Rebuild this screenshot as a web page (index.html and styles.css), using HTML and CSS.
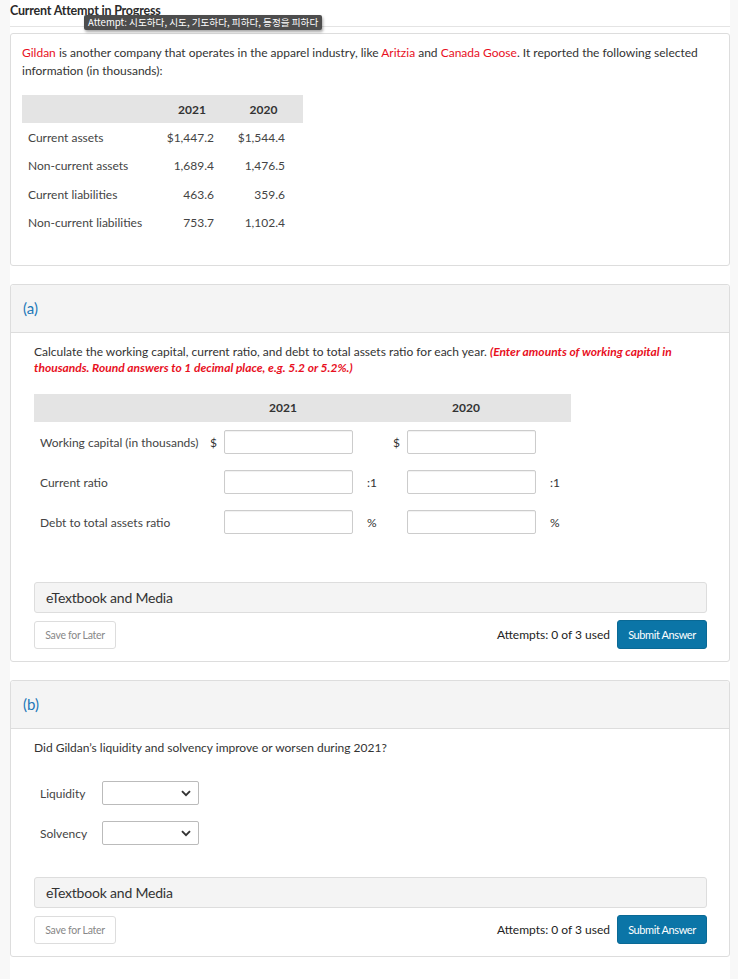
FILE: index.html
```html
<!DOCTYPE html>
<html lang="en">
<head>
<meta charset="utf-8">
<title>Current Attempt in Progress</title>
<link rel="stylesheet" href="styles.css">
</head>
<body>
<div class="page">
  <header class="top">
    <h1 class="title">Current Attempt in Progress</h1>
    <div class="tooltip">Attempt: 시도하다, 시도, 기도하다, 피하다, 등정을 피하다</div>
  </header>

  <section class="card intro">
    <p class="lead"><span class="red">Gildan</span> is another company that operates in the apparel industry, like <span class="red">Aritzia</span> and <span class="red">Canada Goose</span>. It reported the following selected information (in thousands):</p>
    <table class="data">
      <thead>
        <tr><th></th><th class="c2021">2021</th><th class="c2020">2020</th></tr>
      </thead>
      <tbody>
        <tr><td class="lbl">Current assets</td><td class="v1">$1,447.2</td><td class="v2">$1,544.4</td></tr>
        <tr><td class="lbl">Non-current assets</td><td class="v1">1,689.4</td><td class="v2">1,476.5</td></tr>
        <tr><td class="lbl">Current liabilities</td><td class="v1">463.6</td><td class="v2">359.6</td></tr>
        <tr><td class="lbl">Non-current liabilities</td><td class="v1">753.7</td><td class="v2">1,102.4</td></tr>
      </tbody>
    </table>
  </section>

  <section class="card part">
    <div class="part-head">(a)</div>
    <div class="part-body">
      <p class="q">Calculate the working capital, current ratio, and debt to total assets ratio for each year. <em class="hint">(Enter amounts of working capital in thousands. Round answers to 1 decimal place, e.g. 5.2 or 5.2%.)</em></p>
      <div class="grid">
        <div class="ghead">
          <span class="gh1">2021</span>
          <span class="gh2">2020</span>
        </div>
        <div class="grow">
          <span class="glabel">Working capital (in thousands)</span>
          <span class="pre">$</span><input class="inp" type="text"><span class="unit"></span>
          <span class="pre">$</span><input class="inp" type="text"><span class="unit"></span>
        </div>
        <div class="grow">
          <span class="glabel">Current ratio</span>
          <span class="pre"></span><input class="inp" type="text"><span class="unit">:1</span>
          <span class="pre"></span><input class="inp" type="text"><span class="unit">:1</span>
        </div>
        <div class="grow">
          <span class="glabel">Debt to total assets ratio</span>
          <span class="pre"></span><input class="inp" type="text"><span class="unit">%</span>
          <span class="pre"></span><input class="inp" type="text"><span class="unit">%</span>
        </div>
      </div>
      <div class="media media-a">eTextbook and Media</div>
      <div class="actions">
        <button class="save" type="button">Save for Later</button>
        <div class="submit-wrap">
          <span class="attempts">Attempts: 0 of 3 used</span>
          <button class="submit" type="button">Submit Answer</button>
        </div>
      </div>
    </div>
  </section>

  <section class="card part">
    <div class="part-head">(b)</div>
    <div class="part-body">
      <p class="q">Did Gildan’s liquidity and solvency improve or worsen during 2021?</p>
      <div class="selects">
        <div class="srow">
          <span class="slabel">Liquidity</span>
          <span class="selwrap">
            <select class="sel"><option></option><option>Improved</option><option>Worsened</option></select>
            <svg class="chev" width="10" height="7" viewBox="0 0 10 7"><path d="M1 1.2 L5 5.2 L9 1.2" fill="none" stroke="#333" stroke-width="1.9"/></svg>
          </span>
        </div>
        <div class="srow">
          <span class="slabel">Solvency</span>
          <span class="selwrap">
            <select class="sel"><option></option><option>Improved</option><option>Worsened</option></select>
            <svg class="chev" width="10" height="7" viewBox="0 0 10 7"><path d="M1 1.2 L5 5.2 L9 1.2" fill="none" stroke="#333" stroke-width="1.9"/></svg>
          </span>
        </div>
      </div>
      <div class="media media-b">eTextbook and Media</div>
      <div class="actions">
        <button class="save" type="button">Save for Later</button>
        <div class="submit-wrap">
          <span class="attempts">Attempts: 0 of 3 used</span>
          <button class="submit" type="button">Submit Answer</button>
        </div>
      </div>
    </div>
  </section>
</div>
</body>
</html>
```

FILE: styles.css
```css
* { box-sizing: border-box; }

html, body {
  margin: 0;
  padding: 0;
  background: #f8f8f8;
}

body {
  font-family: Lato, "Noto Sans", sans-serif;
  font-size: 12px;
  color: #333;
}

.page {
  margin: 0 8px 0 10px;
  background: #fff;
  min-height: 979px;
  padding-bottom: 22px;
}

.top {
  position: relative;
  height: 27px;
  border-bottom: 1px solid #e4e4e4;
  margin-bottom: 6px;
}

.title {
  margin: 0;
  padding-top: 3px;
  font-size: 12.5px;
  font-weight: 700;
  line-height: 15px;
  color: #2b2b2b;
  letter-spacing: -0.2px;
}

.tooltip {
  position: absolute;
  left: 74px;
  top: 15px;
  height: 15px;
  padding: 0 4px;
  background: #4d4d4d;
  color: #fff;
  font-family: "Noto Sans CJK KR", Lato, sans-serif;
  font-size: 9.6px;
  line-height: 15px;
  border-radius: 2px;
  box-shadow: 1px 2px 3px rgba(0,0,0,0.35);
  white-space: nowrap;
  z-index: 2;
}

.card {
  border: 1px solid #ddd;
  border-radius: 3px;
  background: #fff;
  margin-bottom: 18px;
}

.intro {
  padding: 10px 11px 29px 11px;
  height: 233px;
}

.lead {
  margin: 0 0 15px 0;
  line-height: 18px;
}

.red { color: #e8101e; }

.data {
  border-collapse: collapse;
  width: 281px;
}

.data th {
  background: #e4e4e4;
  height: 28px;
  font-weight: 700;
  color: #333;
  padding: 0;
}

.data th.c2021 { width: 64px; text-align: center; }
.data th.c2020 { width: 79px; text-align: center; }

.data td {
  height: 28.5px;
  padding: 0;
  color: #444;
}

.data td.lbl { padding-left: 6px; }
.data td.v1 { text-align: right; padding-right: 10px; }
.data td.v2 { text-align: right; padding-right: 18px; }

.part-head {
  height: 48px;
  background: #f4f4f4;
  border-bottom: 1px solid #ddd;
  padding-left: 12px;
  font-size: 15px;
  line-height: 47px;
  color: #1d78b8;
  border-radius: 3px 3px 0 0;
}

.part-body {
  padding: 11px 22px 12px 23px;
}

.q {
  margin: 0;
  line-height: 16px;
}

.hint {
  color: #e8101e;
  font-weight: 700;
}

.grid {
  margin-top: 18px;
  width: 537px;
}

.ghead {
  display: grid;
  grid-template-columns: 173px 17px 129px 37px 17px 129px 35px;
  height: 28px;
  background: #e4e4e4;
  font-weight: 700;
  line-height: 28px;
}

.gh1 { grid-column: 2 / 4; text-align: center; padding-left: 6px; }
.gh2 { grid-column: 5 / 7; text-align: center; padding-left: 6px; }

.grow {
  display: grid;
  grid-template-columns: 173px 17px 129px 37px 17px 129px 35px;
  height: 40px;
  align-items: center;
}

.glabel { padding-left: 6px; color: #444; white-space: nowrap; }
.pre { padding-left: 3px; }
.unit { padding-left: 14px; }

.inp {
  width: 129px;
  height: 24px;
  border: 1px solid #ccc;
  border-radius: 2px;
  box-shadow: inset 0 1px 1px rgba(0,0,0,0.06);
  margin: 0;
  padding: 0 6px;
  font: inherit;
}

.media {
  height: 31px;
  background: #f4f4f4;
  border: 1px solid #ddd;
  border-radius: 3px;
  padding-left: 11px;
  font-size: 14px;
  line-height: 29px;
  color: #333;
  letter-spacing: -0.2px;
}

.media-a { margin-top: 40px; }
.media-b { margin-top: 24px; }

.actions {
  display: flex;
  justify-content: space-between;
  align-items: center;
  margin-top: 7px;
}

.save {
  width: 82px;
  height: 28px;
  background: #fff;
  border: 1px solid #ddd;
  border-radius: 3px;
  font-family: inherit;
  font-size: 10.5px;
  color: #888;
  letter-spacing: -0.3px;
  padding: 0;
}

.submit-wrap {
  display: flex;
  align-items: center;
  gap: 7px;
}

.attempts {
  font-size: 12px;
  color: #222;
}

.submit {
  width: 90px;
  height: 29px;
  background: #0b75a7;
  color: #fff;
  border: 1px solid #0a6995;
  border-radius: 3px;
  font-family: inherit;
  font-size: 11px;
  letter-spacing: -0.4px;
  padding: 0;
}

.selects { margin-top: 17px; }

.srow {
  display: flex;
  align-items: center;
  height: 40px;
}

.slabel {
  width: 68px;
  padding-left: 6px;
  color: #444;
}

.selwrap {
  position: relative;
  display: inline-block;
  width: 97px;
  height: 24px;
}

.sel {
  appearance: none;
  -webkit-appearance: none;
  width: 97px;
  height: 24px;
  border: 1px solid #bbb;
  border-radius: 2px;
  background: #fff;
  margin: 0;
}

.chev {
  position: absolute;
  right: 8px;
  top: 9px;
  pointer-events: none;
}
```
